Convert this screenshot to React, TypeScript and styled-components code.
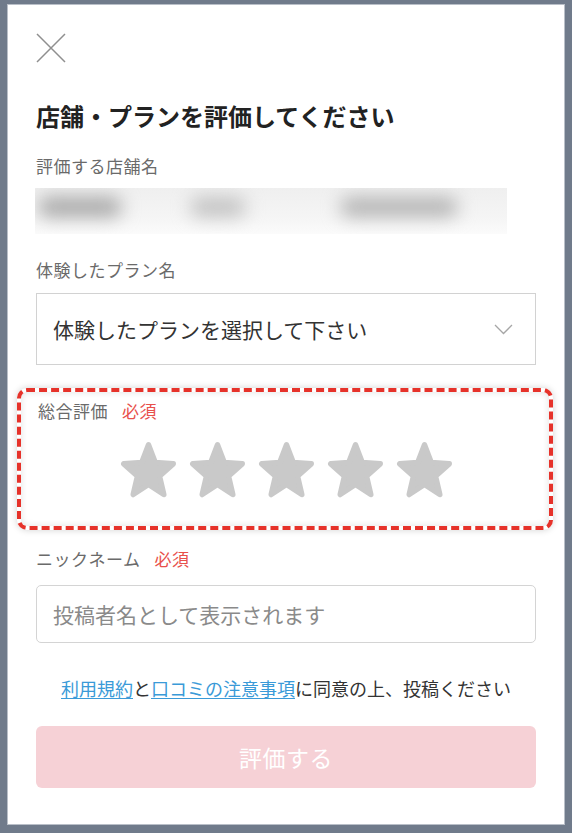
import React from 'react';
import styled, { createGlobalStyle } from 'styled-components';

const GlobalStyle = createGlobalStyle`
  html, body {
    margin: 0;
    padding: 0;
    background: #707b8b;
  }
  body {
    font-family: "Noto Sans CJK JP", "Noto Sans", sans-serif;
  }
`;

const Frame = styled.div`
  padding: 5px 8px 9px;
`;

const Panel = styled.div`
  box-sizing: border-box;
  height: 819px;
  background: #fff;
  box-shadow: 0 0 0 1px #b9bfc8;
  padding: 28px 28px 0;
  display: flex;
  flex-direction: column;
`;

const CloseButton = styled.button`
  width: 30px;
  height: 30px;
  padding: 0;
  border: none;
  background: none;
  display: flex;
`;

const Title = styled.h1`
  margin: 38px 0 0;
  font-size: 24px;
  line-height: 30px;
  font-weight: 700;
  color: #222;
`;

const Label = styled.div<{ $mt: number }>`
  margin-top: ${(p) => p.$mt}px;
  font-size: 17px;
  line-height: 24px;
  color: #6a6a6a;
  letter-spacing: 0.5px;
  display: flex;
  align-items: center;
`;

const Required = styled.span`
  color: #e8504b;
  margin-left: 14px;
`;

const BlurBox = styled.div`
  margin-top: 10px;
  width: 472px;
  height: 46px;
  margin-left: -1px;
  background: linear-gradient(#efefef, #f5f5f5 65%, #fbfbfb);
  display: flex;
  align-items: flex-start;
  padding-top: 9px;
  box-sizing: border-box;
  overflow: hidden;
`;

const Blob = styled.span<{ $w: number; $ml: number; $tone: string }>`
  flex: none;
  width: ${(p) => p.$w}px;
  height: 20px;
  margin-left: ${(p) => p.$ml}px;
  background: ${(p) => p.$tone};
  border-radius: 10px;
  filter: blur(9px);
`;

const Select = styled.div`
  margin-top: 11px;
  height: 72px;
  box-sizing: border-box;
  border: 1.5px solid #d2d2d2;
  display: flex;
  align-items: center;
  justify-content: space-between;
  padding: 0 22px 0 16px;
  font-size: 21px;
  color: #333;
`;

const RatingBox = styled.div`
  margin: 23px -17px 0 -19px;
  height: 142px;
  box-sizing: border-box;
  border: 4px dashed #e6322a;
  border-radius: 10px;
  box-shadow: 0 0 7px rgba(0, 0, 0, 0.18), inset 0 0 7px rgba(0, 0, 0, 0.12);
  padding: 7px 14px 0 17px;
  display: flex;
  flex-direction: column;
`;

const Stars = styled.div`
  margin-top: 17px;
  display: flex;
  justify-content: center;
  gap: 10px;
`;

const TextInput = styled.div`
  margin-top: 14px;
  height: 58px;
  box-sizing: border-box;
  border: 1.5px solid #d4d4d4;
  border-radius: 5px;
  display: flex;
  align-items: center;
  padding-left: 16px;
  font-size: 21px;
  color: #8a8a8a;
`;

const Agreement = styled.p`
  margin: 32px 0 0;
  text-align: center;
  font-size: 18px;
  line-height: 26px;
  color: #333;
`;

const TermsLink = styled.a`
  color: #3a9ad8;
  text-decoration: underline;
  text-underline-offset: 2px;
`;

const SubmitButton = styled.button`
  margin-top: 25px;
  height: 62px;
  border: none;
  border-radius: 6px;
  background: #f6d1d6;
  color: #fff;
  font-family: inherit;
  font-size: 23px;
  letter-spacing: 0.5px;
`;

const CloseIcon = () => (
  <svg width="30" height="30" viewBox="0 0 30 30">
    <path d="M1 1 L29 29 M29 1 L1 29" stroke="#8f8f8f" strokeWidth="1.5" fill="none" />
  </svg>
);

const Chevron = () => (
  <svg width="19" height="11" viewBox="0 0 19 11">
    <path d="M1 1 L9.5 9.5 L18 1" stroke="#a6a6a6" strokeWidth="1.3" fill="none" />
  </svg>
);

// fat five-point star, rounded tips
const starPoints =
  '12,1.9 14.76,8.7 22.08,9.22 16.47,13.95 18.23,21.08 12,17.2 5.77,21.08 7.53,13.95 1.92,9.22 9.24,8.7';

const Star = () => (
  <svg width="59" height="62" viewBox="0 0 24 24" preserveAspectRatio="none">
    <polygon
      points={starPoints}
      fill="#c9c9c9"
      stroke="#c9c9c9"
      strokeWidth="2.2"
      strokeLinejoin="round"
    />
  </svg>
);

const blobs = [
  { w: 84, ml: 3, tone: '#a8a8a8' },
  { w: 56, ml: 68, tone: '#c2c2c2' },
  { w: 118, ml: 94, tone: '#b4b4b4' },
];

export default function App() {
  return (
    <>
      <GlobalStyle />
      <Frame>
        <Panel>
          <CloseButton aria-label="閉じる">
            <CloseIcon />
          </CloseButton>
          <Title>店舗・プランを評価してください</Title>
          <Label $mt={23}>評価する店舗名</Label>
          <BlurBox>
            {blobs.map((b, i) => (
              <Blob key={i} $w={b.w} $ml={b.ml} $tone={b.tone} />
            ))}
          </BlurBox>
          <Label $mt={24}>体験したプラン名</Label>
          <Select>
            <span>体験したプランを選択して下さい</span>
            <Chevron />
          </Select>
          <RatingBox>
            <Label $mt={0}>
              総合評価<Required>必須</Required>
            </Label>
            <Stars>
              {[0, 1, 2, 3, 4].map((i) => (
                <Star key={i} />
              ))}
            </Stars>
          </RatingBox>
          <Label $mt={17}>
            ニックネーム<Required>必須</Required>
          </Label>
          <TextInput>投稿者名として表示されます</TextInput>
          <Agreement>
            <TermsLink>利用規約</TermsLink>と<TermsLink>口コミの注意事項</TermsLink>に同意の上、投稿ください
          </Agreement>
          <SubmitButton>評価する</SubmitButton>
        </Panel>
      </Frame>
    </>
  );
}
